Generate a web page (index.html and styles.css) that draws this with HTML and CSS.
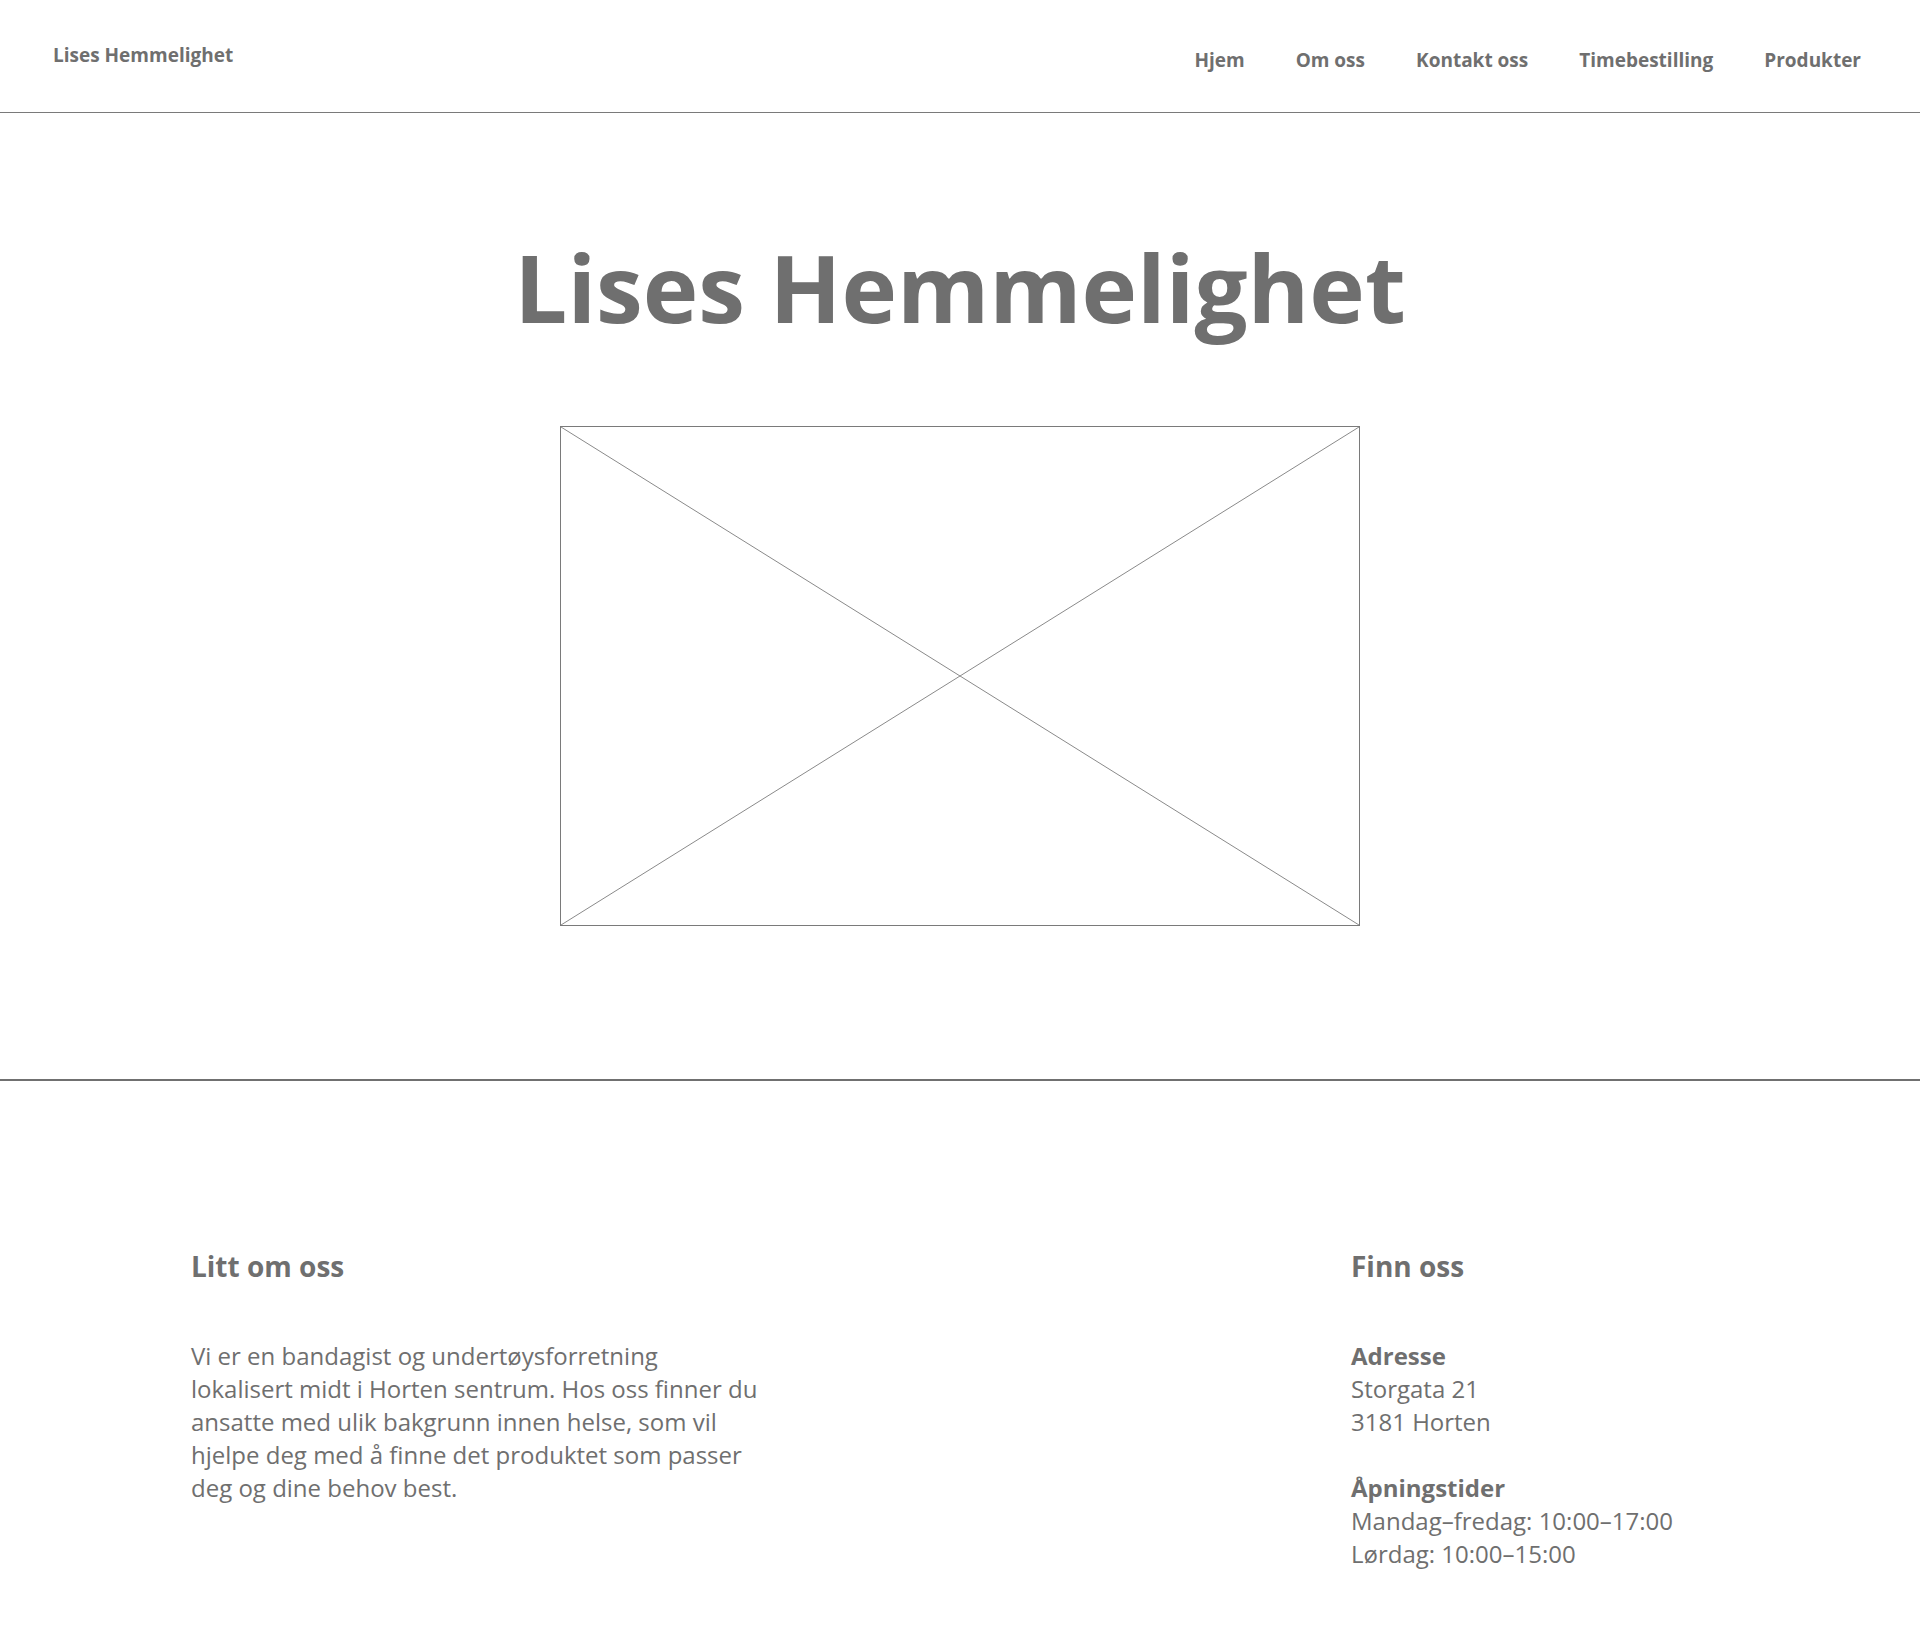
FILE: index.html
```html
<!DOCTYPE html>
<html lang="no">
<head>
<meta charset="utf-8">
<title>Lises Hemmelighet</title>
<link rel="stylesheet" href="styles.css">
</head>
<body>
<header class="site-header">
  <div class="logo">Lises Hemmelighet</div>
  <nav class="nav">
    <a href="#">Hjem</a>
    <a href="#">Om oss</a>
    <a href="#">Kontakt oss</a>
    <a href="#">Timebestilling</a>
    <a href="#">Produkter</a>
  </nav>
</header>
<main class="hero">
  <h1 class="hero-title">Lises Hemmelighet</h1>
  <div class="placeholder">
    <svg viewBox="0 0 100 100" preserveAspectRatio="none" class="placeholder-x">
      <line x1="0" y1="0" x2="100" y2="100"></line>
      <line x1="100" y1="0" x2="0" y2="100"></line>
    </svg>
  </div>
</main>
<footer class="site-footer">
  <section class="about">
    <h2>Litt om oss</h2>
    <p>Vi er en bandagist og undertøysforretning lokalisert midt i Horten sentrum. Hos oss finner du ansatte med ulik bakgrunn innen helse, som vil hjelpe deg med å finne det produktet som passer deg og dine behov best.</p>
  </section>
  <section class="find">
    <h2>Finn oss</h2>
    <p><strong>Adresse</strong><br>Storgata 21<br>3181 Horten</p>
    <p><strong>Åpningstider</strong><br>Mandag–fredag: 10:00–17:00<br>Lørdag: 10:00–15:00</p>
  </section>
</footer>
</body>
</html>
```
FILE: styles.css
```css
html, body {
  margin: 0;
  padding: 0;
  background: #ffffff;
}
body {
  font-family: "Open Sans", "Noto Sans", Arial, sans-serif;
  color: #6f6f6f;
  min-height: 1650px;
}
.site-header {
  display: flex;
  justify-content: space-between;
  align-items: flex-start;
  height: 112px;
  border-bottom: 1px solid #7a7a7a;
  padding: 0 59px 0 53px;
}
.logo {
  margin-top: 42px;
  font-size: 19px;
  line-height: 26px;
  font-weight: 700;
}
.nav {
  display: flex;
  gap: 51px;
  margin-top: 47px;
}
.nav a {
  font-size: 19px;
  line-height: 26px;
  font-weight: 700;
  color: #6f6f6f;
  text-decoration: none;
}
.hero {
  display: flex;
  flex-direction: column;
  align-items: center;
  padding: 126px 0 153px;
}
.hero-title {
  margin: 0;
  font-size: 94px;
  line-height: 96px;
  font-weight: 700;
  color: #6f6f6f;
}
.placeholder {
  margin-top: 91px;
  width: 800px;
  height: 500px;
  box-sizing: border-box;
  border: 1px solid #7a7a7a;
}
.placeholder-x {
  display: block;
  width: 100%;
  height: 100%;
}
.placeholder-x line {
  stroke: #8a8a8a;
  stroke-width: 1;
  vector-effect: non-scaling-stroke;
}
.site-footer {
  border-top: 2px solid #707070;
  display: grid;
  grid-template-columns: 1160px auto;
  padding: 168px 0 0 191px;
}
.site-footer h2 {
  margin: 0 0 56px;
  font-size: 28px;
  line-height: 34px;
  font-weight: 700;
}
.site-footer p {
  margin: 0 0 33px;
  font-size: 24px;
  line-height: 33px;
}
.about p {
  width: 570px;
}
.find strong {
  font-weight: 700;
}
```
